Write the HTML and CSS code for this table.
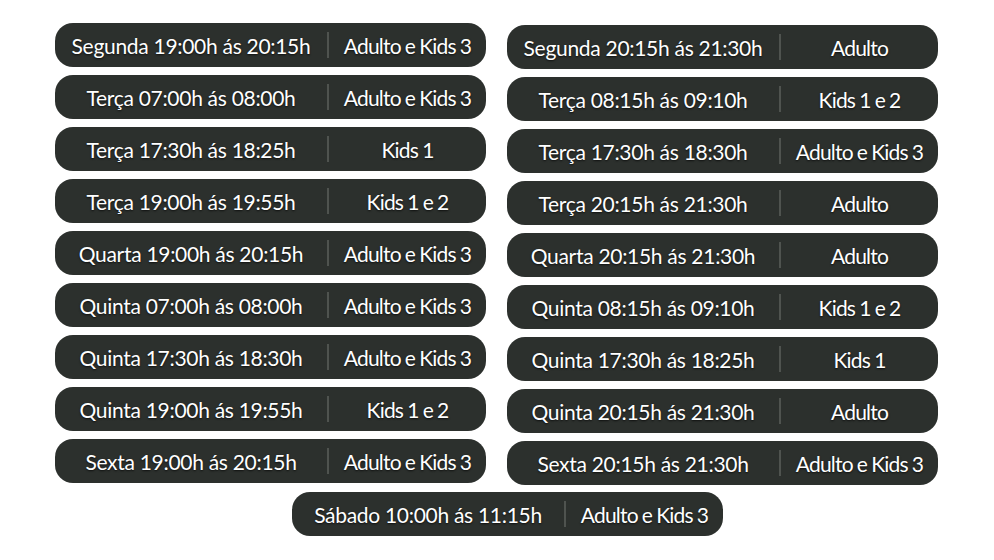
FILE: index.html
```html
<!DOCTYPE html>
<html lang="pt-BR">
<head>
    <meta charset="UTF-8">
    <meta name="viewport" content="width=device-width, initial-scale=1.0">
    <title>Horários</title>
    <link rel="stylesheet" href="styles.css">
</head>
<body>
    <div class="horarios">
        <div class="coluna">
            <div class="turma"><span class="dia">Segunda 19:00h ás 20:15h</span><span class="sep"></span><span class="grupo">Adulto e Kids 3</span></div>
            <div class="turma"><span class="dia">Terça 07:00h ás 08:00h</span><span class="sep"></span><span class="grupo">Adulto e Kids 3</span></div>
            <div class="turma"><span class="dia">Terça 17:30h ás 18:25h</span><span class="sep"></span><span class="grupo">Kids 1</span></div>
            <div class="turma"><span class="dia">Terça 19:00h ás 19:55h</span><span class="sep"></span><span class="grupo">Kids 1 e 2</span></div>
            <div class="turma"><span class="dia">Quarta 19:00h ás 20:15h</span><span class="sep"></span><span class="grupo">Adulto e Kids 3</span></div>
            <div class="turma"><span class="dia">Quinta 07:00h ás 08:00h</span><span class="sep"></span><span class="grupo">Adulto e Kids 3</span></div>
            <div class="turma"><span class="dia">Quinta 17:30h ás 18:30h</span><span class="sep"></span><span class="grupo">Adulto e Kids 3</span></div>
            <div class="turma"><span class="dia">Quinta 19:00h ás 19:55h</span><span class="sep"></span><span class="grupo">Kids 1 e 2</span></div>
            <div class="turma"><span class="dia">Sexta 19:00h ás 20:15h</span><span class="sep"></span><span class="grupo">Adulto e Kids 3</span></div>
        </div>
        <div class="coluna coluna-dir">
            <div class="turma"><span class="dia">Segunda 20:15h ás 21:30h</span><span class="sep"></span><span class="grupo">Adulto</span></div>
            <div class="turma"><span class="dia">Terça 08:15h ás 09:10h</span><span class="sep"></span><span class="grupo">Kids 1 e 2</span></div>
            <div class="turma"><span class="dia">Terça 17:30h ás 18:30h</span><span class="sep"></span><span class="grupo">Adulto e Kids 3</span></div>
            <div class="turma"><span class="dia">Terça 20:15h ás 21:30h</span><span class="sep"></span><span class="grupo">Adulto</span></div>
            <div class="turma"><span class="dia">Quarta 20:15h ás 21:30h</span><span class="sep"></span><span class="grupo">Adulto</span></div>
            <div class="turma"><span class="dia">Quinta 08:15h ás 09:10h</span><span class="sep"></span><span class="grupo">Kids 1 e 2</span></div>
            <div class="turma"><span class="dia">Quinta 17:30h ás 18:25h</span><span class="sep"></span><span class="grupo">Kids 1</span></div>
            <div class="turma"><span class="dia">Quinta 20:15h ás 21:30h</span><span class="sep"></span><span class="grupo">Adulto</span></div>
            <div class="turma"><span class="dia">Sexta 20:15h ás 21:30h</span><span class="sep"></span><span class="grupo">Adulto e Kids 3</span></div>
        </div>
        <div class="turma sabado"><span class="dia">Sábado 10:00h ás 11:15h</span><span class="sep"></span><span class="grupo">Adulto e Kids 3</span></div>
    </div>
</body>
</html>
```
FILE: styles.css
```css
body {
    font-family: Lato, "Liberation Sans", sans-serif;
    margin: 0;
    background-color: #fff;
}
.horarios {
    display: grid;
    grid-template-columns: 431px 431px;
    column-gap: 21px;
    padding: 23px 0 0 55px;
}
.coluna {
    display: flex;
    flex-direction: column;
    gap: 8px;
}
.coluna-dir {
    margin-top: 2px;
}
.turma {
    display: flex;
    align-items: center;
    height: 44px;
    background-color: #2c302d;
    border-radius: 18px;
    color: #fff;
    font-size: 21px;
    text-shadow: 0 1px 2px rgba(0, 0, 0, 0.7);
    white-space: nowrap;
}
.dia {
    width: 272px;
    text-align: center;
    letter-spacing: -0.3px;
}
.sep {
    width: 2px;
    height: 26px;
    background-color: #4f534f;
}
.grupo {
    flex: 1;
    text-align: center;
    letter-spacing: -0.8px;
    word-spacing: -0.5px;
}
.sabado {
    grid-column: 1 / 3;
    width: 431px;
    margin: 7px 0 0 237px;
}
```
